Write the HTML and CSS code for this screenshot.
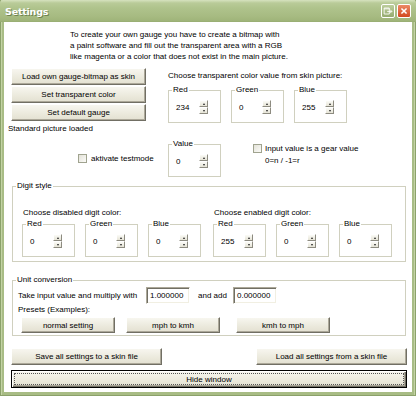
FILE: index.html
```html
<!DOCTYPE html>
<html>
<head>
<meta charset="utf-8">
<title>Settings</title>
<link rel="stylesheet" href="styles.css">
</head>
<body>
<div class="window">
  <div class="titlebar">
    <span class="title">Settings</span>
    <div class="caption-btns">
      <span class="cbtn restore"><svg width="14" height="14" viewBox="0 0 14 14"><path d="M2.5 3.5h6v7h-6z" fill="none" stroke="#fff"/><path d="M2.5 4.5h6" stroke="#fff"/><path d="M6 7.5h5.5M9.5 5.5l2 2-2 2" fill="none" stroke="#fff"/></svg></span>
      <span class="cbtn close"><svg width="14" height="14" viewBox="0 0 14 14"><path d="M4 4l6 6M10 4l-6 6" stroke="#fff" stroke-width="1.8"/></svg></span>
    </div>
  </div>
  <div class="client">
    <p class="intro">To create your own gauge you have to create a bitmap with<br>a paint software and fill out the transparent area with a RGB<br>like magenta or a color that does not exist in the main picture.</p>

    <div class="top">
      <div class="left">
        <button class="btn side">Load own gauge-bitmap as skin</button>
        <button class="btn side">Set transparent color</button>
        <button class="btn side">Set default gauge</button>
        <p class="status">Standard picture loaded</p>
      </div>
      <div class="right">
        <p class="caption">Choose transparent color value from skin picture:</p>
        <div class="rgb">
          <fieldset class="grp"><legend>Red</legend><div class="val"><span class="num">234</span><span class="spin"><i class="up"></i><i class="dn"></i></span></div></fieldset>
          <fieldset class="grp"><legend>Green</legend><div class="val"><span class="num">0</span><span class="spin"><i class="up"></i><i class="dn"></i></span></div></fieldset>
          <fieldset class="grp"><legend>Blue</legend><div class="val"><span class="num">255</span><span class="spin"><i class="up"></i><i class="dn"></i></span></div></fieldset>
        </div>
      </div>
      <div class="left2">
        <label class="check test"><span class="box"></span><span>aktivate testmode</span></label>
      </div>
      <div class="right2">
        <fieldset class="grp"><legend>Value</legend><div class="val"><span class="num">0</span><span class="spin"><i class="up"></i><i class="dn"></i></span></div></fieldset>
        <label class="check gear"><span class="box"></span><span class="gear-text">Input value is a gear value<br>0=n / -1=r</span></label>
      </div>
    </div>

    <fieldset class="frame digit">
      <legend>Digit style</legend>
      <div class="digit-cols">
        <div class="dcol">
          <p class="dcap">Choose disabled digit color:</p>
          <div class="rgb">
            <fieldset class="grp"><legend>Red</legend><div class="val"><span class="num">0</span><span class="spin"><i class="up"></i><i class="dn"></i></span></div></fieldset>
            <fieldset class="grp"><legend>Green</legend><div class="val"><span class="num">0</span><span class="spin"><i class="up"></i><i class="dn"></i></span></div></fieldset>
            <fieldset class="grp"><legend>Blue</legend><div class="val"><span class="num">0</span><span class="spin"><i class="up"></i><i class="dn"></i></span></div></fieldset>
          </div>
        </div>
        <div class="dcol">
          <p class="dcap">Choose enabled digit color:</p>
          <div class="rgb">
            <fieldset class="grp"><legend>Red</legend><div class="val"><span class="num">255</span><span class="spin"><i class="up"></i><i class="dn"></i></span></div></fieldset>
            <fieldset class="grp"><legend>Green</legend><div class="val"><span class="num">0</span><span class="spin"><i class="up"></i><i class="dn"></i></span></div></fieldset>
            <fieldset class="grp"><legend>Blue</legend><div class="val"><span class="num">0</span><span class="spin"><i class="up"></i><i class="dn"></i></span></div></fieldset>
          </div>
        </div>
      </div>
    </fieldset>

    <fieldset class="frame unit">
      <legend>Unit conversion</legend>
      <div class="conv">
        <span class="conv-lbl">Take input value and multiply with</span>
        <span class="tbox">1.000000</span>
        <span class="and">and add</span>
        <span class="tbox">0.000000</span>
      </div>
      <p class="presets">Presets (Examples):</p>
      <div class="preset-btns">
        <button class="btn preset">normal setting</button>
        <button class="btn preset p2">mph to kmh</button>
        <button class="btn preset p3">kmh to mph</button>
      </div>
    </fieldset>

    <div class="files">
      <button class="btn file">Save all settings to a skin file</button>
      <button class="btn file">Load all settings from a skin file</button>
    </div>
    <button class="btn hide"><span class="focus">Hide window</span></button>
  </div>
</div>
</body>
</html>
```

FILE: styles.css
```css
html, body {
  margin: 0;
  padding: 0;
  background: #a8bc85;
}

.window {
  width: 416px;
  height: 396px;
  box-sizing: border-box;
  display: flex;
  flex-direction: column;
  background: #a8bc85;
  box-shadow: inset 1px 0 #8ba16a, inset -1px 0 #8ba16a, inset 0 -1px #8ba16a, inset 2px 0 #c3d3a4, inset -2px 0 #c3d3a4;
  font-family: "Liberation Sans", Arial, sans-serif;
  font-size: 8px;
  color: #000;
}

.titlebar {
  height: 22px;
  flex: none;
  display: flex;
  align-items: center;
  justify-content: space-between;
  padding: 0 5px 0 5px;
  background: linear-gradient(#d6e2bf 0, #b9cb98 3px, #afc38c 8px, #a7bb82 16px, #9fb479 21px, #95aa70 22px);
  border-radius: 3px 3px 0 0;
}

.title {
  font-family: "DejaVu Sans", sans-serif;
  font-weight: bold;
  font-size: 9.5px;
  color: #fff;
  text-shadow: 1px 1px 0 #6f8450;
  letter-spacing: -0.2px;
}

.caption-btns {
  display: flex;
  gap: 2px;
}

.cbtn {
  width: 14px;
  height: 14px;
  box-sizing: border-box;
  display: flex;
  border: 1px solid #fff;
  border-radius: 2px;
}

.cbtn svg {
  width: 12px;
  height: 12px;
}

.restore {
  background: linear-gradient(#bccd9c, #95ab6f);
}

.close {
  background: linear-gradient(#ec8a66, #d2481f);
}

.client {
  flex: 1;
  margin: 0 4px 4px 4px;
  background: #fff;
  padding: 7px 0 0 0;
}

p {
  margin: 0;
}

.intro {
  margin-left: 66px;
  line-height: 11px;
}

/* top area */
.top {
  display: grid;
  grid-template-columns: 160px auto;
  row-gap: 5px;
  margin: 6px 0 0 4px;
}

.left {
  display: flex;
  flex-direction: column;
}

.btn {
  font-family: inherit;
  font-size: 8px;
  color: #000;
  padding: 0;
  margin: 0;
  box-sizing: border-box;
  height: 17px;
  background: linear-gradient(#f7f6ef, #ebe9dc 60%, #e3e0d1);
  border: 1px solid;
  border-color: #fff #716f64 #716f64 #fff;
  box-shadow: inset -1px -1px #aca899;
}

.side {
  width: 135px;
  margin: 0 0 1px 3px;
}

.status {
  margin-top: 1px;
  line-height: 11px;
}

.right {
  display: flex;
  flex-direction: column;
}

.caption {
  margin-top: 2px;
  line-height: 11px;
}

.rgb {
  display: flex;
  gap: 10px;
  margin-top: 4px;
}

.grp {
  width: 53px;
  min-width: 0;
  box-sizing: border-box;
  margin: 0;
  padding: 5px 4px 8px 7px;
  border: 1px solid #d0d0bf;
}

legend {
  padding: 0 1px;
  margin-left: -4px;
  line-height: 10px;
}

.val {
  display: flex;
  align-items: center;
  height: 14px;
}

.num {
  width: 23px;
  line-height: 11px;
}

.spin {
  display: flex;
  flex-direction: column;
  width: 9px;
  height: 14px;
}

.spin i {
  flex: 1;
  box-sizing: border-box;
  display: flex;
  align-items: center;
  justify-content: center;
  background: linear-gradient(#fbfbf7, #e6e4d6);
  border: 1px solid;
  border-color: #fff #8d8b80 #8d8b80 #fff;
}

.spin i::after {
  content: "";
  width: 0;
  height: 0;
  border-left: 1.5px solid transparent;
  border-right: 1.5px solid transparent;
}

.spin .up::after {
  border-bottom: 2px solid #222;
}

.spin .dn::after {
  border-top: 2px solid #222;
}

.left2 {
  padding-top: 14px;
}

.check {
  display: flex;
  align-items: flex-start;
  line-height: 11px;
}

.box {
  width: 9px;
  height: 9px;
  box-sizing: border-box;
  border: 1px solid #a0a38f;
  background: linear-gradient(135deg, #e3e2d8, #fbfbf8);
  flex: none;
  margin-top: 1px;
}

.test {
  margin-left: 70px;
}

.test .box {
  margin-right: 4px;
}

.right2 {
  display: flex;
  align-items: flex-start;
}

.gear {
  margin: 4px 0 0 32px;
  line-height: 12px;
}

.gear .box {
  margin: 1px 3px 0 0;
}

/* frames */
.frame {
  margin: 4px 0 0 8px;
  width: 394px;
  box-sizing: border-box;
  min-width: 0;
  border: 1px solid #d0d0bf;
}

.digit {
  padding: 16px 0 4px 9px;
}

.digit > legend {
  margin-left: -6px;
}

.digit-cols {
  display: flex;
  gap: 12px;
}

.dcap {
  line-height: 11px;
  margin-left: 1px;
}

.dcol .rgb {
  margin-top: 1px;
}

.unit {
  margin-top: 13px;
  padding: 2px 0 2px 5px;
}

.unit > legend {
  margin-left: -2px;
}

.conv {
  display: flex;
  align-items: center;
  height: 17px;
}

.conv > span {
  flex: none;
}

.conv-lbl {
  width: 128px;
}

.tbox {
  width: 44px;
  height: 17px;
  box-sizing: border-box;
  padding: 0 0 0 3px;
  display: flex;
  align-items: center;
  border: 1px solid;
  border-color: #aca899 #fff #fff #aca899;
  box-shadow: inset 1px 1px #716f64, inset -1px -1px #f1efe2;
  background: #fff;
}

.and {
  width: 43px;
  padding-left: 8px;
  box-sizing: border-box;
}

.presets {
  line-height: 11px;
}

.preset-btns {
  display: flex;
  margin: 2px 0 0 3px;
}

.preset {
  width: 94px;
  height: 16px;
}

.p2 {
  margin-left: 11px;
}

.p3 {
  margin-left: 16px;
}

.files {
  display: flex;
  justify-content: space-between;
  width: 396px;
  margin: 12px 0 0 7px;
}

.file {
  width: 151px;
}

.hide {
  display: flex;
  width: 396px;
  height: 18px;
  margin: 5px 0 0 7px;
  padding: 2px;
  border: 1px solid #000;
  box-shadow: inset 1px 1px #fff, inset -1px -1px #716f64, inset -2px -2px #aca899;
}

.focus {
  flex: 1;
  display: flex;
  align-items: center;
  justify-content: center;
  border: 1px dotted #555;
}
```
